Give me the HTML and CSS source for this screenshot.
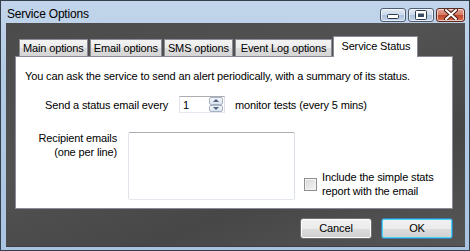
FILE: index.html
```html
<!DOCTYPE html>
<html lang="en">
<head>
    <meta charset="UTF-8">
    <meta name="viewport" content="width=device-width, initial-scale=1.0">
    <title>Service Options</title>
    <link rel="stylesheet" href="styles.css">
</head>
<body>
    <div class="window">
        <div class="titlebar">
            <span class="title">Service Options</span>
            <div class="caption-buttons">
                <div class="cap cap-min">
                    <svg width="12" height="6" viewBox="0 0 12 6"><rect x="0.5" y="0.5" width="11" height="4" rx="1" fill="#fff" stroke="#2c3a4e"/></svg>
                </div>
                <div class="cap cap-max">
                    <svg width="12" height="10" viewBox="0 0 12 10"><rect x="0.5" y="0.5" width="11" height="9" rx="1" fill="#fff" stroke="#2c3a4e"/><rect x="3" y="3.5" width="6" height="3.5" fill="#3b4b63"/></svg>
                </div>
                <div class="cap cap-close">
                    <svg width="14" height="11" viewBox="0 0 14 11"><path d="M2 1 L12 10 M12 1 L2 10" stroke="#4a1a12" stroke-width="4" stroke-linecap="round"/><path d="M2 1 L12 10 M12 1 L2 10" stroke="#fff" stroke-width="2" stroke-linecap="round"/></svg>
                </div>
            </div>
        </div>

        <div class="client">
            <div class="tabs">
                <div class="tab">Main options</div>
                <div class="tab">Email options</div>
                <div class="tab">SMS options</div>
                <div class="tab tab-wide">Event Log options</div>
                <div class="tab tab-active">Service Status</div>
            </div>

            <div class="panel">
                <p class="intro">You can ask the service to send an alert periodically, with a summary of its status.</p>

                <div class="send-row">
                    <span>Send a status email every</span>
                    <div class="spinner">
                        <span class="spin-value">1</span>
                        <div class="spin-buttons">
                            <span class="spin-btn spin-up"></span>
                            <span class="spin-btn spin-down"></span>
                        </div>
                    </div>
                    <span>monitor tests (every 5 mins)</span>
                </div>

                <div class="recip-row">
                    <div class="recip-label">Recipient emails<br>(one per line)</div>
                    <div class="textarea"></div>
                    <div class="check">
                        <span class="checkbox"></span>
                        <span>Include the simple stats<br>report with the email</span>
                    </div>
                </div>
            </div>

            <div class="actions">
                <div class="btn">Cancel</div>
                <div class="btn btn-default">OK</div>
            </div>
        </div>
    </div>
</body>
</html>
```

FILE: styles.css
```css
* {
    margin: 0;
    padding: 0;
    box-sizing: border-box;
    font-family: "Liberation Sans", Arial, sans-serif;
}

body {
    width: 470px;
    height: 251px;
    overflow: hidden;
    background-color: #fff;
}

.window {
    width: 470px;
    height: 251px;
    border: 1px solid #34404e;
    background: linear-gradient(to bottom, #c2d5eb, #b4cbe4 30%, #a9c4e2 100%);
    display: flex;
    flex-direction: column;
    padding: 0 4px 3px 5px;
}

.titlebar {
    height: 22px;
    display: flex;
    align-items: center;
    justify-content: space-between;
}

.title {
    font-size: 12px;
    letter-spacing: -0.2px;
    color: #000;
    margin-left: 1px;
    margin-top: 3px;
}

.caption-buttons {
    display: flex;
    gap: 2px;
    margin-top: 5px;
}

.cap {
    height: 14px;
    border: 1px solid #4d5c70;
    border-radius: 3px;
    display: flex;
    align-items: center;
    justify-content: center;
    background: linear-gradient(to bottom, #e3ebf5, #c9d8ea 50%, #aec3de 51%, #c3d4ea);
    box-shadow: inset 0 0 0 1px rgba(255, 255, 255, 0.6);
}

.cap-min {
    width: 26px;
}

.cap-min svg {
    margin-top: 4px;
}

.cap-max {
    width: 26px;
}

.cap-close {
    width: 29px;
    border-color: #5a2a22;
    background: linear-gradient(to bottom, #e6a493, #d27863 50%, #c0452e 51%, #d3704f);
}

.client {
    flex: 1;
    background: linear-gradient(160deg, #4b4b4b, #525252 40%, #474747 70%, #565656);
    padding: 12px 12px 0 9px;
    border-bottom: 1px solid #3d3d3d;
    font-size: 11px;
    letter-spacing: -0.14px;
    color: #000;
}

.tabs {
    display: flex;
    align-items: flex-end;
    gap: 2px;
    margin-left: 4px;
    height: 21px;
}

.tab {
    height: 17px;
    padding: 0 3px;
    white-space: nowrap;
    line-height: 17px;
    background: linear-gradient(to bottom, #f3f3f3, #ebebeb 50%, #dddddd 51%, #d5d5d5);
    border: 1px solid #898c95;
    border-bottom: none;
}

.tab-wide {
    padding: 0 5px;
}

.tab-active {
    height: 21px;
    margin-bottom: -1px;
    margin-left: -1px;
    padding: 0 7px;
    line-height: 18px;
    background: #fff;
    position: relative;
}

.panel {
    height: 153px;
    background-color: #fff;
    border: 1px solid #898c95;
    padding: 12px 0 0 9px;
}

.intro {
    line-height: 14px;
}

.send-row {
    display: flex;
    align-items: center;
    margin-top: 13px;
    padding-left: 20px;
    line-height: 14px;
}

.spinner {
    width: 46px;
    height: 17px;
    margin: 0 10px 0 11px;
    border: 1px solid #abadb3;
    border-color: #abadb3 #dbdfe6 #e3e9ef #e2e3ea;
    display: flex;
    justify-content: space-between;
    align-items: center;
}

.spin-value {
    padding-left: 3px;
}

.spin-buttons {
    display: flex;
    flex-direction: column;
    width: 14px;
    height: 15px;
    margin-right: 1px;
}

.spin-btn {
    flex: 1;
    border: 1px solid #a6b3c4;
    background: linear-gradient(to bottom, #f4f6f9, #dde4ee);
    border-radius: 2px;
    position: relative;
}

.spin-btn::after {
    content: "";
    position: absolute;
    left: 3px;
    top: 1px;
    border-left: 3px solid transparent;
    border-right: 3px solid transparent;
}

.spin-up::after {
    border-bottom: 3px solid #4d6185;
}

.spin-down::after {
    border-top: 3px solid #4d6185;
}

.recip-row {
    display: flex;
    align-items: flex-start;
    margin-top: 18px;
    line-height: 14px;
}

.recip-label {
    width: 92px;
    text-align: right;
}

.textarea {
    width: 167px;
    height: 68px;
    margin: 1px 0 0 11px;
    border: 1px solid #abadb3;
    border-color: #abadb3 #dbdfe6 #e3e9ef #e2e3ea;
    border-radius: 2px;
}

.check {
    display: flex;
    align-items: center;
    gap: 5px;
    margin: 39px 0 0 9px;
}

.checkbox {
    width: 13px;
    height: 13px;
    border: 1px solid #8e8f8f;
    background: linear-gradient(135deg, #d6d6d6, #f6f6f6);
    box-shadow: inset 0 0 0 1px #f4f4f4;
}

.actions {
    display: flex;
    justify-content: flex-end;
    gap: 9px;
    margin-top: 9px;
}

.btn {
    width: 72px;
    height: 21px;
    border: 1px solid #707070;
    border-radius: 3px;
    line-height: 19px;
    text-align: center;
    background: linear-gradient(to bottom, #f2f2f2, #ebebeb 50%, #dddddd 51%, #cfcfcf);
    box-shadow: inset 0 0 0 1px #fcfcfc;
}

.btn-default {
    border-color: #3c7fb1;
    box-shadow: inset 0 0 0 1px #48d4f4;
}
```
